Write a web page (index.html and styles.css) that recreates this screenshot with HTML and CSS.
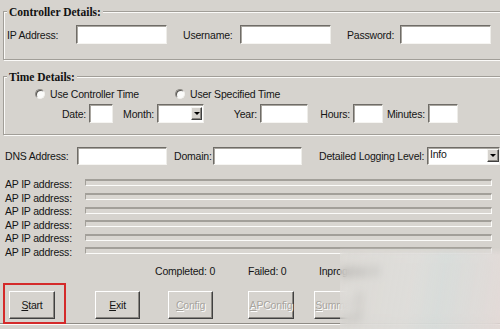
FILE: index.html
```html
<!DOCTYPE html>
<html lang="en">
  <head>
    <meta charset="UTF-8">
    <title>Controller Details</title>
    <link rel="stylesheet" href="styles.css">
  </head>
  <body>
    <div class="group">
      <div class="legend">Controller Details:</div>
      <div class="row row-ctrl">
        <span class="lbl">IP Address:</span><span class="field"></span>
        <span class="lbl">Username:</span><span class="field"></span>
        <span class="lbl">Password:</span><span class="field"></span>
      </div>
    </div>

    <div class="group group-time">
      <div class="legend">Time Details:</div>
      <div class="radios">
        <span class="opt opt-first"><span class="radio"></span>Use Controller Time</span>
        <span class="opt"><span class="radio"></span>User Specified Time</span>
      </div>
      <div class="row row-date">
        <span class="lbl">Date:</span><span class="field"></span>
        <span class="lbl">Month:</span><span class="field combo"><span class="drop drop-sm"></span></span>
        <span class="lbl">Year:</span><span class="field"></span>
        <span class="lbl">Hours:</span><span class="field"></span>
        <span class="lbl">Minutes:</span><span class="field"></span>
      </div>
    </div>

    <div class="row row-dns">
      <span class="lbl">DNS Address:</span><span class="field"></span>
      <span class="lbl lbl-domain">Domain:</span><span class="field"></span>
      <span class="lbl lbl-log">Detailed Logging Level:</span><span class="field combo combo-log">Info<span class="drop"></span></span>
    </div>

    <div class="ap-list">
      <div class="ap"><span class="ap-lbl">AP IP address:</span><span class="bar"></span></div>
      <div class="ap"><span class="ap-lbl">AP IP address:</span><span class="bar"></span></div>
      <div class="ap"><span class="ap-lbl">AP IP address:</span><span class="bar"></span></div>
      <div class="ap"><span class="ap-lbl">AP IP address:</span><span class="bar"></span></div>
      <div class="ap"><span class="ap-lbl">AP IP address:</span><span class="bar"></span></div>
      <div class="ap"><span class="ap-lbl">AP IP address:</span><span class="bar"></span></div>
    </div>

    <div class="status">
      <span class="st-done">Completed: 0</span>
      <span class="st-fail">Failed: 0</span>
      <span>Inprogress: 0</span>
    </div>

    <div class="buttons">
      <span class="hl"><button class="btn"><u>S</u>tart</button></span>
      <button class="btn btn-exit"><u>E</u>xit</button>
      <button class="btn btn-config" disabled><u>C</u>onfig</button>
      <button class="btn btn-ap" disabled><u>A</u>PConfig</button>
      <button class="btn btn-sum" disabled><u>S</u>ummary</button>
    </div>

    <div class="sep"></div>

    <div class="smudge"></div>
  </body>
</html>
```

FILE: styles.css
```css
body {
  margin: 0;
  padding-top: 11px;
  width: 500px;
  height: 329px;
  box-sizing: border-box;
  overflow: hidden;
  position: relative;
  background: #d6d3ce;
  color: #151515;
  font-family: "Liberation Sans", Arial, sans-serif;
  font-size: 10.5px;
  letter-spacing: -0.2px;
}

/* group boxes */
.group {
  margin: 0 -10px 0 3px;
  padding-bottom: 15px;
  border: 1px solid #a19e98;
  box-shadow: inset 1px 1px 0 #fbfaf8, 1px 1px 0 #fbfaf8;
}
.group-time {
  margin-top: 16px;
  padding-bottom: 11px;
}
.legend {
  width: fit-content;
  margin: -6px 0 0 3px;
  padding: 0 2px;
  background: #d6d3ce;
  font-family: "Liberation Serif", "Times New Roman", serif;
  font-weight: bold;
  font-size: 11.5px;
  line-height: 13px;
  letter-spacing: 0;
  color: #111;
}

/* rows */
.row {
  display: grid;
  align-items: center;
  height: 19px;
}
.row-ctrl {
  margin-top: 6px;
  padding-left: 3px;
  grid-template-columns: 69px 91px 73px 91px 69px 91px;
}
.row-ctrl .lbl:not(:first-child) {
  padding-left: 16px;
}
.row-date {
  margin-top: 3px;
  grid-template-columns: 85px 24px 44px 47px 56px 48px 45px 30px 45px 30px;
}
.row-date .lbl {
  text-align: right;
  padding-right: 3px;
}
.row-dns {
  margin-top: 12px;
  height: 18px;
  padding-left: 5px;
  grid-template-columns: 72px 90px 46px 89px 125px 73px;
}
.lbl-domain {
  padding-left: 7px;
}
.lbl-log {
  padding-left: 17px;
}

.field {
  display: block;
  box-sizing: border-box;
  height: 100%;
  background: #fff;
  border: 1px solid;
  border-color: #6f6c67 #eeede9 #f6f5f2 #6f6c67;
  box-shadow: inset 1px 1px 0 #a9a6a0;
}
.combo {
  display: flex;
  justify-content: flex-end;
  align-items: flex-start;
  padding: 1px;
}
.combo-log {
  justify-content: space-between;
  padding: 0 0 0 2px;
  line-height: 13px;
}
.drop {
  position: relative;
  width: 12px;
  height: 13px;
  box-sizing: border-box;
  background: #d6d3ce;
  border: 1px solid;
  border-color: #f6f5f2 #404040 #404040 #f6f5f2;
  box-shadow: inset -1px -1px 0 #8a8782;
  margin: 1px 0 0;
}
.drop-sm {
  width: 11px;
}
.drop::after {
  content: "";
  position: absolute;
  left: 2px;
  top: 4px;
  border-left: 3px solid transparent;
  border-right: 3px solid transparent;
  border-top: 3px solid #000;
}

/* radios */
.radios {
  display: flex;
  align-items: center;
  height: 14px;
  margin-top: 3px;
  padding-left: 31px;
}
.opt {
  display: flex;
  align-items: center;
  gap: 5px;
}
.opt-first {
  width: 140px;
}
.radio {
  width: 10px;
  height: 10px;
  box-sizing: border-box;
  border-radius: 50%;
  background: #fbfbfa;
  border: 1px solid;
  border-color: #8a8782 #f2f1ee #f2f1ee #8a8782;
  box-shadow: inset 1px 1px 0 #55534f;
}

/* AP rows */
.ap-list {
  margin-top: 12.2px;
}
.ap {
  display: flex;
  align-items: center;
  height: 13.6px;
  padding-left: 5px;
}
.ap-lbl {
  width: 80px;
}
.bar {
  width: 407px;
  height: 7px;
  box-sizing: border-box;
  margin-top: -2px;
  background: #d9d6d1;
  border-top: 2px solid #a29f99;
  border-left: 1px solid #a29f99;
  border-right: 1px solid #fbfbf9;
  border-bottom: 1px solid #fbfbf9;
}

/* status + buttons */
.status {
  display: flex;
  margin-top: 6.5px;
  height: 13px;
  line-height: 13px;
  padding-left: 155px;
}
.st-done {
  width: 93px;
}
.st-fail {
  width: 71px;
}

.buttons {
  display: flex;
  align-items: flex-start;
  margin-top: 12.7px;
  padding-left: 9px;
}
.btn {
  width: 46px;
  height: 28px;
  padding: 0;
  background: #d6d3ce;
  border: 1px solid;
  border-color: #fff #404040 #404040 #fff;
  box-shadow: inset -1px -1px 0 #8a8782;
  font: inherit;
  letter-spacing: -0.2px;
  color: #151515;
}
.btn:disabled {
  color: #a8a59f;
  text-shadow: 1px 1px 0 #fff;
}
.btn-exit {
  width: 45px;
  margin-left: 40px;
}
.btn-config {
  width: 45px;
  margin-left: 28px;
}
.btn-ap {
  margin-left: 35px;
}
.btn-sum {
  margin-left: 20px;
}
.hl {
  position: relative;
  display: flex;
}
.hl::after {
  content: "";
  position: absolute;
  left: -6px;
  top: -8px;
  right: -11px;
  bottom: -5px;
  border: 2px solid #d42a2a;
}

.sep {
  margin-top: 4px;
  border-top: 1px solid #8e8b85;
  border-bottom: 1px solid #fbfaf8;
}

/* blurred watermark corner */
.smudge {
  position: absolute;
  left: 340px;
  top: 247px;
  right: 0;
  bottom: 0;
  backdrop-filter: blur(5px);
  background: linear-gradient(100deg, rgba(224, 222, 218, 0.55) 0%, rgba(228, 228, 226, 0.6) 45%, rgba(218, 228, 228, 0.55) 62%, rgba(234, 222, 220, 0.65) 100%);
  -webkit-mask-image: linear-gradient(to bottom, transparent 0, #000 8px);
  mask-image: linear-gradient(to bottom, transparent 0, #000 8px);
}
```
